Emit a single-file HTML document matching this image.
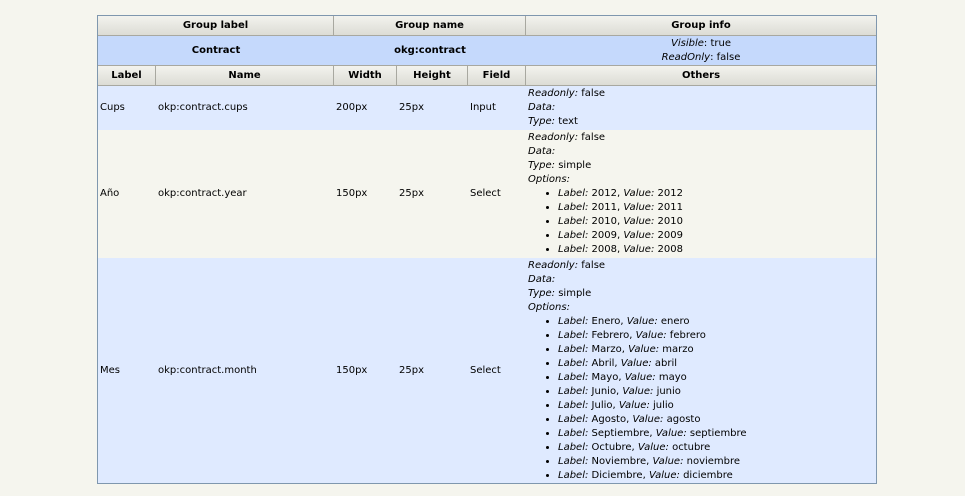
<!DOCTYPE html>
<html><head><meta charset="utf-8"><style>
body{margin:0;background:#f5f5ee;font-family:"DejaVu Sans","Liberation Sans",sans-serif;font-size:10px;color:#000;width:965px;height:496px;overflow:hidden;position:relative}
.t{position:absolute;left:97px;top:15px;width:778px;height:467px;border:1px solid #7f97ae;background:#dfeaff}
.h{position:absolute;background:linear-gradient(#f3f3ee,#dcdcd5);border-right:1px solid #a8a8a0;border-bottom:1px solid #a8a8a0;font-weight:bold;text-align:center;line-height:19px;box-sizing:border-box}
.g{position:absolute;left:0;top:20px;width:778px;height:30px;background:#c5d9fc;border-bottom:1px solid #a8a8a0;box-sizing:border-box}
.c{position:absolute;line-height:14px;white-space:nowrap}
.r{position:absolute;left:0;width:778px}
i{font-style:italic}
ul{margin:0;padding:0 0 0 30px;list-style:disc}
li{line-height:14px}
</style></head><body>
<div class="t">
<div class="h" style="left:0;top:0;width:236px;height:20px">Group label</div>
<div class="h" style="left:236px;top:0;width:192px;height:20px">Group name</div>
<div class="h" style="left:428px;top:0;width:350px;height:20px;border-right:none">Group info</div>
<div class="g">
<div class="c" style="left:0;width:236px;text-align:center;top:8px;font-weight:bold">Contract</div>
<div class="c" style="left:236px;width:192px;text-align:center;top:8px;font-weight:bold">okg:contract</div>
<div class="c" style="left:428px;width:350px;text-align:center;top:1px;line-height:14px"><i>Visible</i>: true<br><i>ReadOnly</i>: false</div>
</div>
<div class="h" style="left:0;top:50px;width:58px;height:20px">Label</div>
<div class="h" style="left:58px;top:50px;width:178px;height:20px">Name</div>
<div class="h" style="left:236px;top:50px;width:63px;height:20px">Width</div>
<div class="h" style="left:299px;top:50px;width:71px;height:20px">Height</div>
<div class="h" style="left:370px;top:50px;width:58px;height:20px">Field</div>
<div class="h" style="left:428px;top:50px;width:350px;height:20px;border-right:none">Others</div>

<div class="r" style="top:70px;height:44px;background:#dfeaff">
<div class="c" style="left:2px;top:15px">Cups</div>
<div class="c" style="left:60px;top:15px">okp:contract.cups</div>
<div class="c" style="left:238px;top:15px">200px</div>
<div class="c" style="left:301px;top:15px">25px</div>
<div class="c" style="left:372px;top:15px">Input</div>
<div class="c" style="left:430px;top:1px"><i>Readonly:</i> false<br><i>Data:</i><br><i>Type:</i> text</div>
</div>

<div class="r" style="top:114px;height:128px;background:#f5f5ee">
<div class="c" style="left:2px;top:57px">Año</div>
<div class="c" style="left:60px;top:57px">okp:contract.year</div>
<div class="c" style="left:238px;top:57px">150px</div>
<div class="c" style="left:301px;top:57px">25px</div>
<div class="c" style="left:372px;top:57px">Select</div>
<div class="c" style="left:430px;top:1px"><i>Readonly:</i> false<br><i>Data:</i><br><i>Type:</i> simple<br><i>Options:</i>
<ul><li><i>Label:</i> 2012, <i>Value:</i> 2012</li><li><i>Label:</i> 2011, <i>Value:</i> 2011</li><li><i>Label:</i> 2010, <i>Value:</i> 2010</li><li><i>Label:</i> 2009, <i>Value:</i> 2009</li><li><i>Label:</i> 2008, <i>Value:</i> 2008</li></ul></div>
</div>

<div class="r" style="top:242px;height:225px;background:#dfeaff">
<div class="c" style="left:2px;top:106px">Mes</div>
<div class="c" style="left:60px;top:106px">okp:contract.month</div>
<div class="c" style="left:238px;top:106px">150px</div>
<div class="c" style="left:301px;top:106px">25px</div>
<div class="c" style="left:372px;top:106px">Select</div>
<div class="c" style="left:430px;top:1px"><i>Readonly:</i> false<br><i>Data:</i><br><i>Type:</i> simple<br><i>Options:</i>
<ul><li><i>Label:</i> Enero, <i>Value:</i> enero</li><li><i>Label:</i> Febrero, <i>Value:</i> febrero</li><li><i>Label:</i> Marzo, <i>Value:</i> marzo</li><li><i>Label:</i> Abril, <i>Value:</i> abril</li><li><i>Label:</i> Mayo, <i>Value:</i> mayo</li><li><i>Label:</i> Junio, <i>Value:</i> junio</li><li><i>Label:</i> Julio, <i>Value:</i> julio</li><li><i>Label:</i> Agosto, <i>Value:</i> agosto</li><li><i>Label:</i> Septiembre, <i>Value:</i> septiembre</li><li><i>Label:</i> Octubre, <i>Value:</i> octubre</li><li><i>Label:</i> Noviembre, <i>Value:</i> noviembre</li><li><i>Label:</i> Diciembre, <i>Value:</i> diciembre</li></ul></div>
</div>
</div>
</body></html>
